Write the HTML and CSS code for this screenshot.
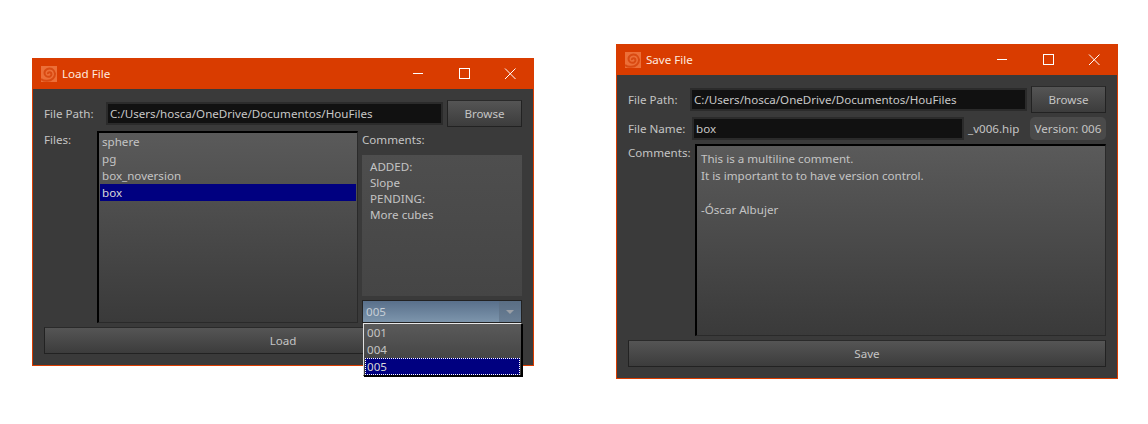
FILE: index.html
```html
<!DOCTYPE html>
<html lang="en">
<head>
<meta charset="utf-8">
<title>Load and Save File</title>
<link rel="stylesheet" href="styles.css">
</head>
<body>
<section class="window load">
  <header class="titlebar">
    <svg class="logo" viewBox="0 0 16 16"><rect width="16" height="16" fill="#ec6f38"/><path d="M0 13C3 15.500 9 15.500 12 12.500C15 9.500 14.500 5 11 3C7.500 1.500 3.500 3.500 3.500 7C3.500 10 6.500 11.500 9 10.500C11 9.500 11 7 9 6.300C7.800 6 6.800 6.800 7 8" fill="none" stroke="#d94a12" stroke-width="2"/></svg>
    <span class="title">Load File</span>
    <div class="controls">
      <svg viewBox="0 0 46 31"><path d="M18 15.500H28" stroke="#fff"/></svg>
      <svg viewBox="0 0 46 31"><rect x="18.500" y="10.500" width="10" height="10" fill="none" stroke="#fff"/></svg>
      <svg viewBox="0 0 46 31"><path d="M18 10.500L28.500 21M28.500 10.500L18 21" stroke="#fff" fill="none"/></svg>
    </div>
  </header>
  <div class="body">
    <div class="path-row">
      <label class="path-label">File Path:</label>
      <div class="input">C:/Users/hosca/OneDrive/Documentos/HouFiles</div>
      <button class="btn browse">Browse</button>
    </div>
    <div class="main-row">
      <label class="files-label">Files:</label>
      <ul class="list">
        <li>sphere</li>
        <li>pg</li>
        <li>box_noversion</li>
        <li class="sel">box</li>
      </ul>
      <div class="side">
        <div class="comments-label">Comments:</div>
        <div class="comment-box">
          <p>ADDED:</p>
          <p>Slope</p>
          <p>PENDING:</p>
          <p>More cubes</p>
        </div>
        <div class="combo"><span class="combo-text">005</span><span class="combo-arrow"><i></i></span></div>
      </div>
    </div>
    <button class="btn wide">Load</button>
  </div>
  <ul class="popup">
    <li>001</li>
    <li>004</li>
    <li class="cur">005</li>
  </ul>
</section>

<section class="window save">
  <header class="titlebar">
    <svg class="logo" viewBox="0 0 16 16"><rect width="16" height="16" fill="#ec6f38"/><path d="M0 13C3 15.500 9 15.500 12 12.500C15 9.500 14.500 5 11 3C7.500 1.500 3.500 3.500 3.500 7C3.500 10 6.500 11.500 9 10.500C11 9.500 11 7 9 6.300C7.800 6 6.800 6.800 7 8" fill="none" stroke="#d94a12" stroke-width="2"/></svg>
    <span class="title">Save File</span>
    <div class="controls">
      <svg viewBox="0 0 46 31"><path d="M18 15.500H28" stroke="#fff"/></svg>
      <svg viewBox="0 0 46 31"><rect x="18.500" y="10.500" width="10" height="10" fill="none" stroke="#fff"/></svg>
      <svg viewBox="0 0 46 31"><path d="M18 10.500L28.500 21M28.500 10.500L18 21" stroke="#fff" fill="none"/></svg>
    </div>
  </header>
  <div class="body">
    <div class="path-row">
      <label class="path-label">File Path:</label>
      <div class="input">C:/Users/hosca/OneDrive/Documentos/HouFiles</div>
      <button class="btn browse">Browse</button>
    </div>
    <div class="name-row">
      <label class="name-label">File Name:</label>
      <div class="input name-input">box</div>
      <span class="suffix">_v006.hip</span>
      <span class="version">Version: 006</span>
    </div>
    <div class="comment-row">
      <label class="c-label">Comments:</label>
      <div class="editor">
        <p>This is a multiline comment.</p>
        <p>It is important to to have version control.</p>
        <p>&nbsp;</p>
        <p>-Óscar Albujer</p>
      </div>
    </div>
    <button class="btn wide">Save</button>
  </div>
</section>
</body>
</html>
```
FILE: styles.css
```css
* { box-sizing: border-box; }
html, body { margin: 0; padding: 0; background: #fff; }
body { width: 1148px; height: 424px; position: relative; overflow: hidden; font: 11.6px/17px "Noto Sans", sans-serif; color: #c4c4c4; }
p { margin: 0; }
ul { list-style: none; margin: 0; padding: 0; }

.window { position: absolute; width: 502px; background: #3a3a3a; border: 1px solid #d93c00; border-top: 0; display: flex; flex-direction: column; }
.load { left: 32px; top: 58px; height: 308px; }
.save { left: 616px; top: 44px; height: 335px; }

.titlebar { height: 31px; margin: 0 -1px; background: #d93c00; display: flex; align-items: center; padding-left: 9px; color: #fff; }
.logo { width: 16px; height: 16px; flex: none; }
.title { margin-left: 5px; color: #ffe9df; }
.controls { margin-left: auto; display: flex; margin-right: 1px; }
.controls svg { width: 46px; height: 31px; display: block; }

.body { flex: 1; display: flex; flex-direction: column; padding: 11px; }
.path-row { display: flex; align-items: center; height: 27px; }
.path-label { width: 62px; flex: none; }
.input { flex: none; background: #111; border: 2px solid #2b2b2b; height: 23px; line-height: 19px; padding-left: 2px; color: #c8c8c8; width: 337px; }
.btn { background: linear-gradient(#555, #3c3c3c); border: 1px solid #222; border-top-color: #2a2a2a; color: #c4c4c4; font: inherit; padding: 0; height: 27px; }
.browse { width: 75px; margin-left: 4px; }
.wide { width: 478px; flex: none; margin-top: auto; }

.main-row { display: flex; margin-top: 4px; }
.files-label { width: 53px; flex: none; }
.list { width: 261px; height: 192px; flex: none; border: 1px solid #2a2a2a; border-top: 2px solid #000; border-left: 2px solid #000; background: linear-gradient(#5a5a5a, #3a3a3a); padding: 0 1px; }
.list li { height: 17px; padding-left: 2px; }
.list .sel { background: #000080; color: #d8d8d8; }
.side { width: 160px; margin-left: 4px; display: flex; flex-direction: column; }
.comments-label { height: 24px; }
.comment-box { height: 141px; line-height: 16px; background: linear-gradient(#4e4e4e, #454545); padding: 4px 8px; }
.combo { margin-top: 4px; height: 23px; display: flex; border: 1px solid #222; background: linear-gradient(#59708b, #7d95ac); color: #c6ced6; }
.combo-text { flex: 1; padding: 2px 3px; }
.combo-arrow { width: 22px; background: linear-gradient(#5a6e84, #6a7f95); display: flex; align-items: center; justify-content: center; }
.combo-arrow i { width: 0; height: 0; border: 4px solid transparent; border-top: 4px solid #9a9fa6; border-bottom: 0; }

.popup { position: absolute; left: 330px; top: 265px; width: 159px; height: 53px; background: linear-gradient(#5a5a5a, #3c3c3c); border: 1px solid #000; border-top: 1px solid #e8e8e8; border-left-color: #e0e0e0; padding: 0 1px; box-shadow: 1px 1px 0 #000; }
.popup li { height: 17px; padding-left: 2px; }
.popup .cur { background: #000080; color: #d8d8d8; outline: 1px dotted #fff; outline-offset: -1px; }

.name-row { display: flex; align-items: center; height: 23px; margin-top: 4px; }
.name-label { width: 64px; flex: none; }
.name-input { width: 272px; }
.suffix { margin-left: 4px; width: 58px; }
.version { width: 76px; height: 23px; line-height: 23px; background: #4a4a4a; border-radius: 5px; text-align: center; margin-left: 4px; }
.comment-row { display: flex; margin-top: 4px; }
.c-label { width: 67px; flex: none; }
.editor { width: 411px; height: 192px; border: 1px solid #2a2a2a; border-top: 2px solid #000; border-left: 2px solid #000; background: linear-gradient(#5a5a5a, #3a3a3a); padding: 4px; }
```
